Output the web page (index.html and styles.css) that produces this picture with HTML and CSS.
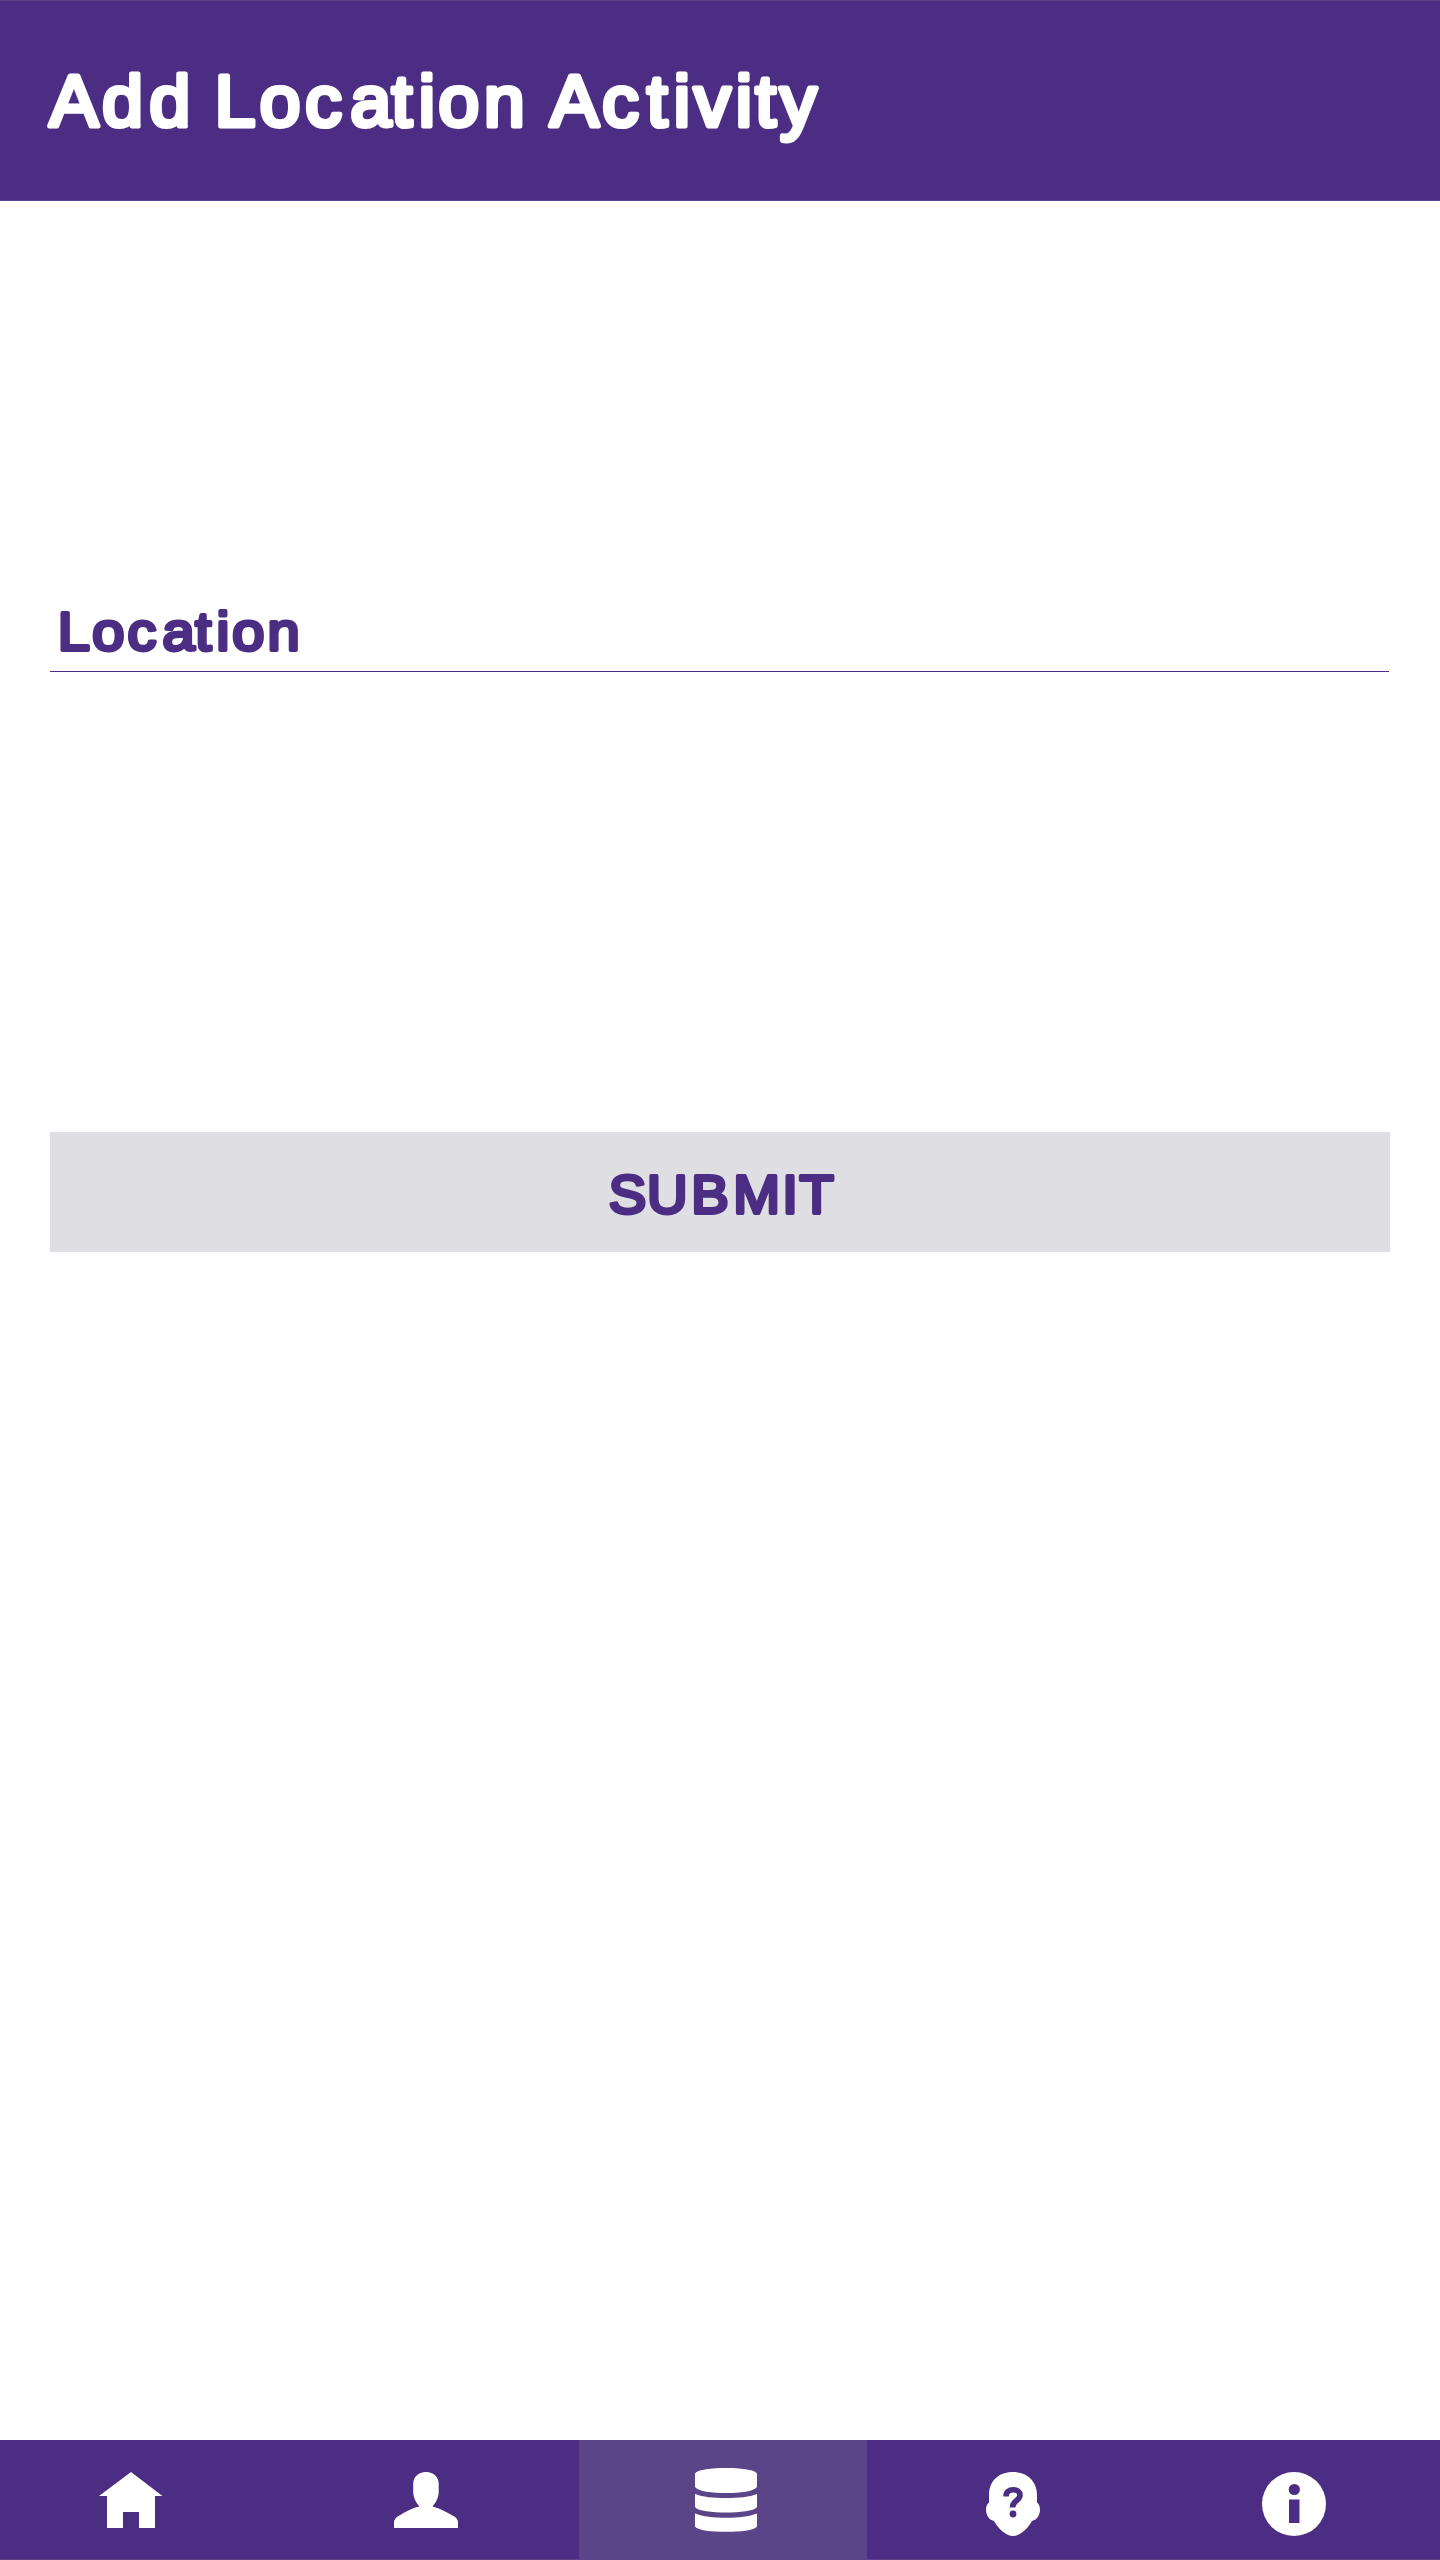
FILE: index.html
```html
<!DOCTYPE html>
<html lang="en">
<head>
<meta charset="utf-8">
<title>Add Location Activity</title>
<link rel="stylesheet" href="styles.css">
</head>
<body>
<div class="screen">
  <header class="header">
    <h1 class="title">
      <svg width="1440" height="199" viewBox="0 1 1440 199">
        <text class="lettering lettering-title" y="126.400" x="49.500 102.200 149.400 195 214.800 259.700 305.200 350.500 391.800 418.700 438.500 484 530 550 602.200 646.900 673.800 694 735.700 755.400 780">Add Location Activity</text>
      </svg>
    </h1>
  </header>
  <main class="content">
    <div class="field">
      <svg width="1339" height="81" viewBox="50 590 1339 81">
        <text class="lettering" transform="scale(1.06 1)" y="650" x="54.500 87.100 120.400 153.200 184.200 204.300 219.200 252.400">Location</text>
      </svg>
    </div>
    <button class="submit" type="button">
      <svg width="1340" height="120" viewBox="50 1132 1340 120">
        <text class="lettering" transform="scale(1.03 1)" y="1213" x="591 628.200 671.100 711.900 759.500 776.200">SUBMIT</text>
      </svg>
    </button>
  </main>
  <nav class="nav">
    <a class="tab tab-home">
      <svg width="64" height="64" viewBox="0 0 64 64"><path d="M32 4 63.500 28H56v32H40V44H24v16H8V28H0Z"/></svg>
    </a>
    <a class="tab tab-user">
      <svg width="64" height="64" viewBox="0 0 64 64"><path d="M32 4c8 0 12.700 5 12.700 12v9c-.3 5-3 10-6.200 13.500 9 2.200 15 6.500 21 9.500 3 1.700 4.500 4 4.500 6v6H0v-6c0-2 1.500-4.300 4.500-6 6-3.500 12-7.500 21-9.500-3.500-3.500-6-8.500-6.300-13.500v-9C19.200 9 24 4 32 4Z"/></svg>
    </a>
    <a class="tab tab-data">
      <svg width="64" height="66" viewBox="0 0 64 66"><path d="M1 6.500C4 2.300 18 1 32 1s28 1.300 31 5.500V20c-3 4.500-17 6-31 6S4 24.500 1 20ZM1 27c8 3 18 4 31 4s23-1 31-4v13c-3 4.200-17 5.500-31 5.500S4 44.200 1 40ZM1 46.500c8 3 18 4.200 31 4.200s23-1.200 31-4.200V59.500c-3 4-17 5.300-31 5.300S4 63.500 1 59.500Z"/></svg>
    </a>
    <a class="tab tab-help">
      <svg width="64" height="64" viewBox="0 0 64 64"><path d="M32 0C47 0 56 9.500 56 23v7.500C61 34 60 47 51 49 46.500 57 39 64 32 64S17.500 57 13 49C4 47 3 34 8 30.500V23C8 9.500 17 0 32 0Z"/><path class="mark" d="M25 24.500c0-4.500 3-6.800 7.300-6.800 4 0 6.700 2 6.700 5.300 0 6-7.500 5-7.500 12.500"/><circle class="hole" cx="32" cy="42" r="3.400"/></svg>
    </a>
    <a class="tab tab-info">
      <svg width="64" height="64" viewBox="0 0 64 64"><circle cx="32" cy="32" r="32"/><circle class="hole" cx="32.300" cy="17.500" r="5.600"/><path class="hole" d="M27 27.500h10.500v23.500H27Z"/></svg>
    </a>
  </nav>
</div>
</body>
</html>
```
FILE: styles.css
```css
body { margin: 0; background: #fff; }
svg { display: block; }

.screen {
  display: flex;
  flex-direction: column;
  width: 1440px;
  height: 2560px;
}

.header {
  box-sizing: border-box;
  height: 201px;
  background: #4b2e83;
  border-top: 1px solid #5b428d;
  border-bottom: 1px solid #5b428d;
}
.title { margin: 0; }

/* Rounded lettering: a regular face thickened with a round-jointed outline */
.lettering {
  font: 400 54.500px "Liberation Sans", Arial, sans-serif;
  fill: #4b2e83;
  stroke: #4b2e83;
  stroke-width: 3.800px;
  stroke-linejoin: round;
}
.lettering-title {
  font-size: 73px;
  fill: #fff;
  stroke: #fff;
  stroke-width: 5px;
}

.content {
  flex: 1;
  display: flex;
  flex-direction: column;
  gap: 460px;
  padding: 389px 50px 0;
}
.field { margin-right: 1px; border-bottom: 1px solid #4b2e83; }
.submit {
  height: 120px;
  padding: 0;
  border: 0;
  background: #dfdee3;
}

.nav {
  display: grid;
  grid-template-columns: 290px 289px 288px 287px 286px;
  height: 120px;
  background: #4b2e83;
}
.tab {
  box-sizing: border-box;
  padding-top: 32px;
  border-bottom: 1px solid #5b428d;
  fill: #fff;
}
.tab-home { padding-top: 28px; padding-left: 99px; }
.tab-user { padding-top: 28px; padding-left: 104px; }
.tab-data { padding-top: 27px; padding-left: 115px; background: #5b4488; }
.tab-help { padding-left: 114px; }
.tab-info { padding-left: 108px; }
.hole { fill: #4b2e83; }
.mark { fill: none; stroke: #4b2e83; stroke-width: 5.600px; }
```
